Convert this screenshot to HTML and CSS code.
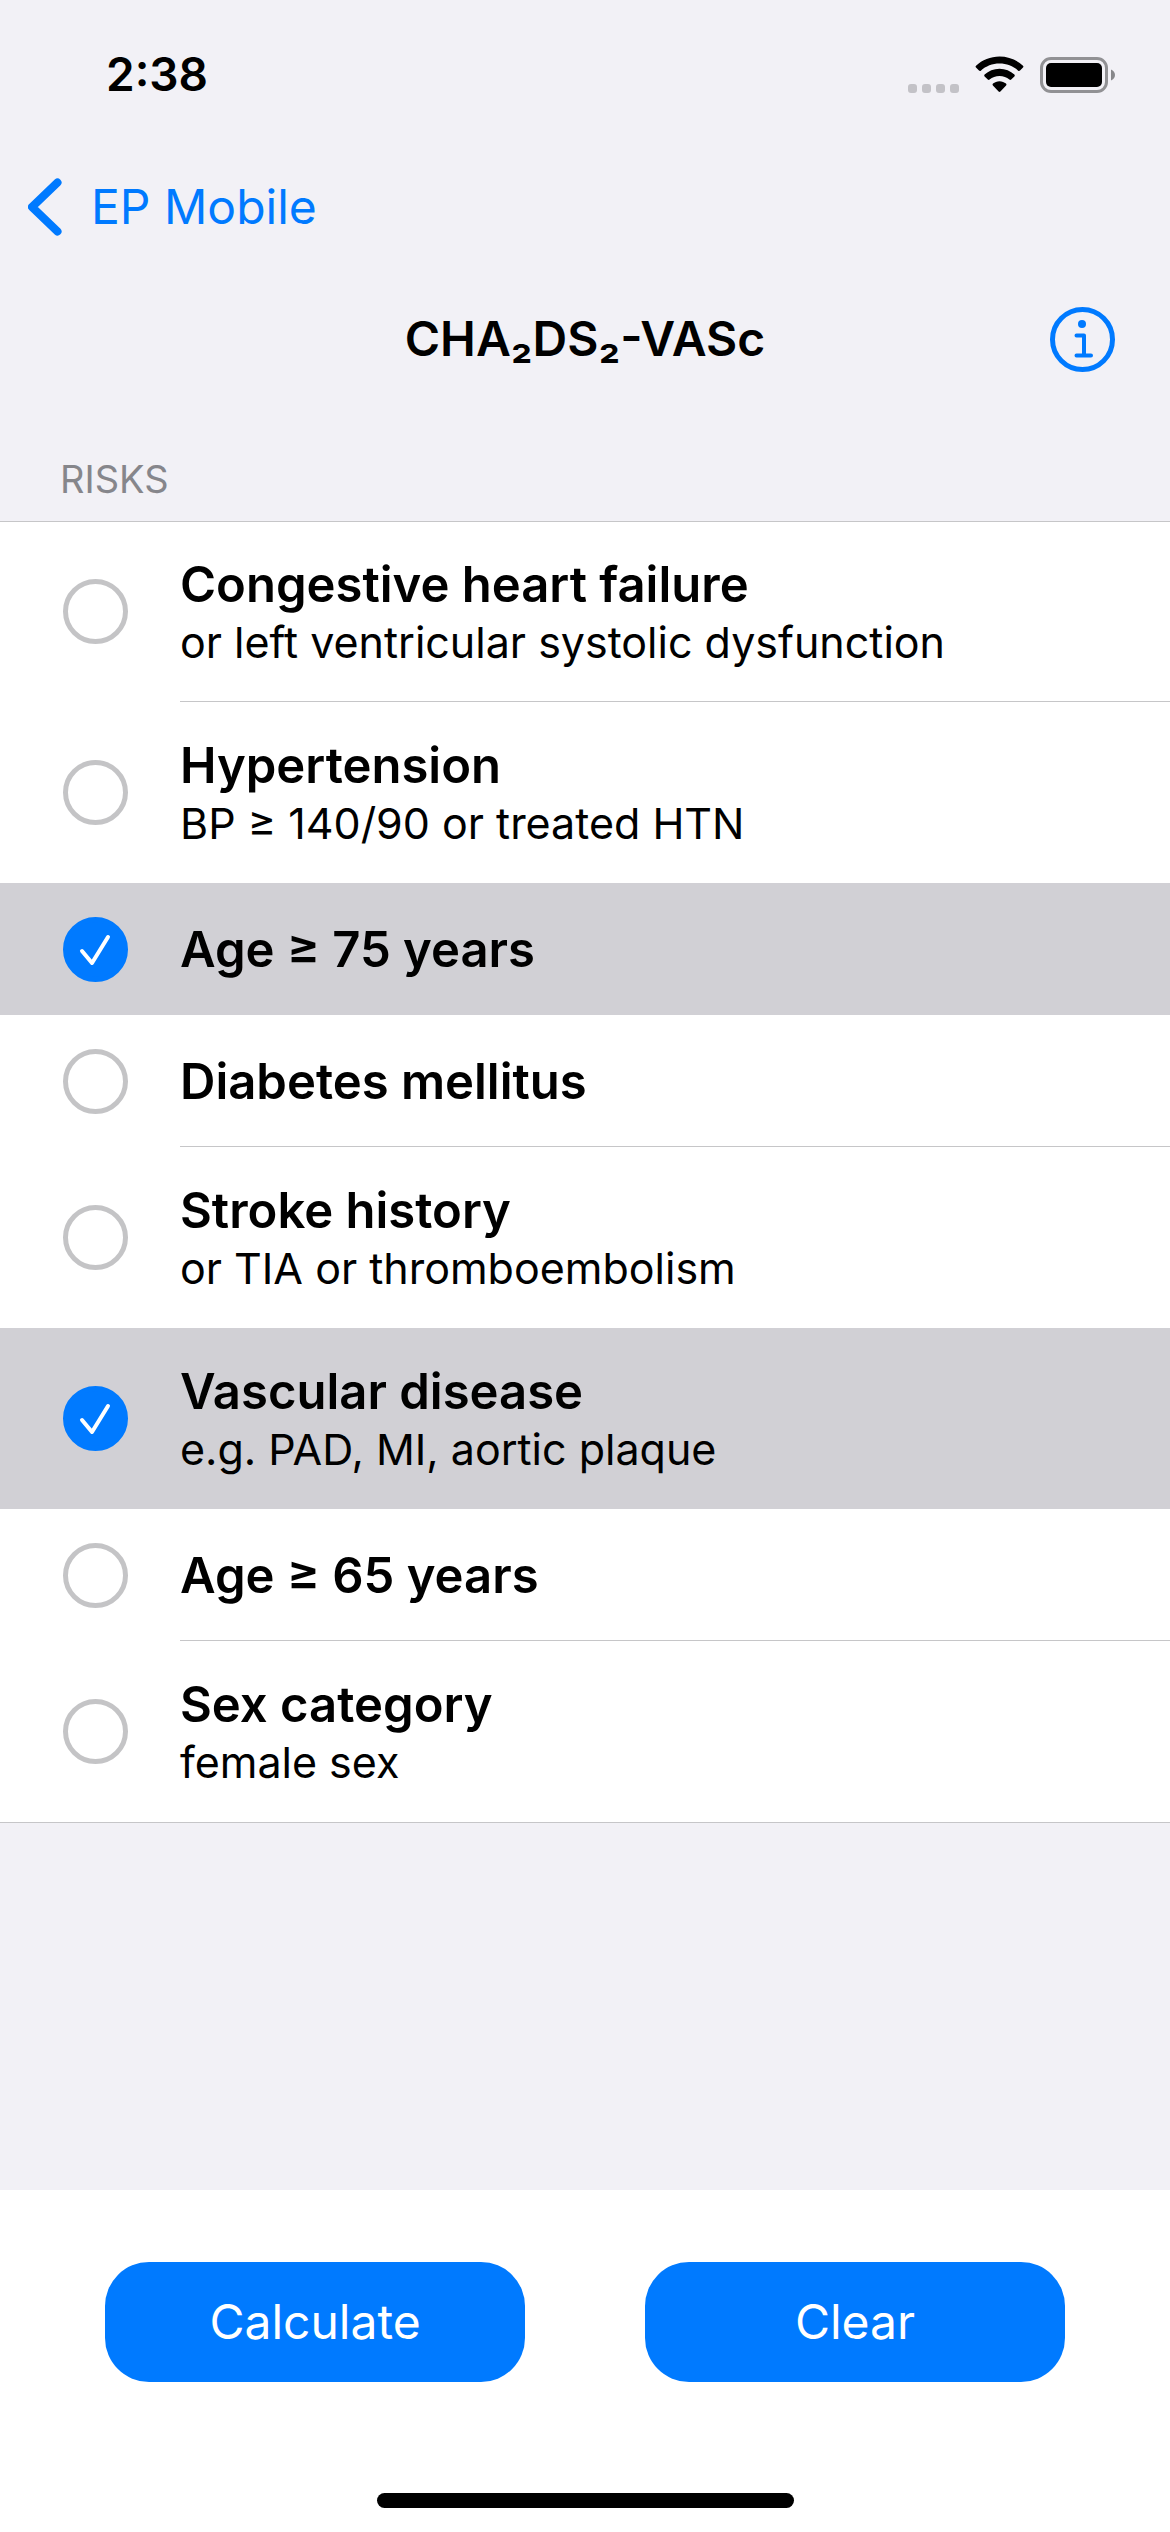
FILE: index.html
```html
<!DOCTYPE html>
<html lang="en">
<head>
  <meta charset="utf-8">
  <meta name="viewport" content="width=device-width, initial-scale=1">
  <title>CHA₂DS₂-VASc</title>
  <link rel="stylesheet" href="styles.css">
</head>
<body>
  <div class="status-bar">
    <time class="clock">2:38</time>
    <div class="indicators">
      <svg class="signal" width="51" height="9" viewBox="0 0 51 9" aria-hidden="true">
        <rect width="9" height="9" rx="3"/><rect x="14" width="9" height="9" rx="3"/><rect x="28" width="9" height="9" rx="3"/><rect x="42" width="9" height="9" rx="3"/>
      </svg>
      <svg class="wifi" width="49" height="37" viewBox="0 0 49 37" aria-hidden="true">
        <path d="M24.500 0.500C33.500 0.500 41.800 4 48 9.700Q48.900 10.600 48 11.500L45 14.600Q44.100 15.500 43.200 14.700C38.100 10.200 31.600 7.600 24.500 7.600S10.900 10.200 5.800 14.700Q4.900 15.500 4 14.600L1 11.500Q0.100 10.600 1 9.700C7.200 4 15.500 0.500 24.500 0.500Z"/>
        <path d="M24.500 12.800C30.300 12.800 35.500 15 39.400 18.600Q40.300 19.500 39.400 20.400L36.200 23.500Q35.300 24.400 34.400 23.600C31.700 21.300 28.300 20 24.500 20S17.300 21.300 14.600 23.600Q13.700 24.400 12.800 23.500L9.600 20.400Q8.700 19.500 9.600 18.600C13.500 15 18.700 12.800 24.500 12.800Z"/>
        <path d="M24.500 25.200C27 25.200 29.300 26.100 31 27.600Q32 28.500 31.100 29.400L25.400 35.500Q24.500 36.400 23.600 35.500L17.900 29.400Q17 28.500 18 27.600C19.700 26.100 22 25.200 24.500 25.200Z"/>
      </svg>
      <svg class="battery" width="75" height="36" viewBox="0 0 75 36" aria-hidden="true">
        <rect class="battery-shell" x="1.500" y="1.500" width="65" height="33" rx="9.500"/>
        <rect x="6" y="6" width="56" height="24" rx="5"/>
        <path class="battery-cap" d="M71 12.500C73.500 13.500 75 15.500 75 18S73.500 22.500 71 23.500Z"/>
      </svg>
    </div>
  </div>

  <nav class="nav">
    <a class="back" href="#">
      <svg width="34" height="58" viewBox="0 0 34 58" aria-hidden="true"><path d="M29.500 4.500L4 29L29.500 53.500"/></svg>
      <span>EP Mobile</span>
    </a>
  </nav>

  <header class="title-bar">
    <h1>CHA₂DS₂-VASc</h1>
    <button class="info" type="button" aria-label="Information">
      <svg width="65" height="65" viewBox="0 0 65 65" aria-hidden="true">
        <circle class="info-ring" cx="32.500" cy="32.500" r="30"/>
        <circle class="info-dot" cx="32" cy="17" r="4"/>
        <path class="info-stem" d="M26.500 28.500H34V48.500M26.500 48.500H41"/>
      </svg>
    </button>
  </header>

  <main>
    <h2>RISKS</h2>
    <ul class="risks">
      <li><label class="risk">
        <span class="tick"><input type="checkbox"><svg viewBox="0 0 65 65" aria-hidden="true"><path d="M19 34L29 46L45 20"/></svg></span>
        <span class="text"><span class="name">Congestive heart failure</span><span class="detail">or left ventricular systolic dysfunction</span></span>
      </label></li>
      <li><label class="risk">
        <span class="tick"><input type="checkbox"><svg viewBox="0 0 65 65" aria-hidden="true"><path d="M19 34L29 46L45 20"/></svg></span>
        <span class="text"><span class="name">Hypertension</span><span class="detail">BP ≥ 140/90 or treated HTN</span></span>
      </label></li>
      <li><label class="risk">
        <span class="tick"><input type="checkbox" checked><svg viewBox="0 0 65 65" aria-hidden="true"><path d="M19 34L29 46L45 20"/></svg></span>
        <span class="text"><span class="name">Age ≥ 75 years</span></span>
      </label></li>
      <li><label class="risk">
        <span class="tick"><input type="checkbox"><svg viewBox="0 0 65 65" aria-hidden="true"><path d="M19 34L29 46L45 20"/></svg></span>
        <span class="text"><span class="name">Diabetes mellitus</span></span>
      </label></li>
      <li><label class="risk">
        <span class="tick"><input type="checkbox"><svg viewBox="0 0 65 65" aria-hidden="true"><path d="M19 34L29 46L45 20"/></svg></span>
        <span class="text"><span class="name">Stroke history</span><span class="detail">or TIA or thromboembolism</span></span>
      </label></li>
      <li><label class="risk">
        <span class="tick"><input type="checkbox" checked><svg viewBox="0 0 65 65" aria-hidden="true"><path d="M19 34L29 46L45 20"/></svg></span>
        <span class="text"><span class="name">Vascular disease</span><span class="detail">e.g. PAD, MI, aortic plaque</span></span>
      </label></li>
      <li><label class="risk">
        <span class="tick"><input type="checkbox"><svg viewBox="0 0 65 65" aria-hidden="true"><path d="M19 34L29 46L45 20"/></svg></span>
        <span class="text"><span class="name">Age ≥ 65 years</span></span>
      </label></li>
      <li><label class="risk">
        <span class="tick"><input type="checkbox"><svg viewBox="0 0 65 65" aria-hidden="true"><path d="M19 34L29 46L45 20"/></svg></span>
        <span class="text"><span class="name">Sex category</span><span class="detail">female sex</span></span>
      </label></li>
    </ul>
  </main>

  <footer class="actions">
    <div class="buttons">
      <button class="action" type="button">Calculate</button>
      <button class="action" type="button">Clear</button>
    </div>
    <div class="home-indicator"></div>
  </footer>
</body>
</html>
```
FILE: styles.css
```css
:root {
  --blue: #007aff;
  --page: #f2f1f6;
  --line: #c6c6c8;
  --selected: #d1d0d5;
}

* {
  box-sizing: border-box;
}

body {
  margin: 0;
  min-height: 100vh;
  display: flex;
  flex-direction: column;
  background: var(--page);
  color: #000;
  font-family: Inter, "Liberation Sans", sans-serif;
}

svg {
  display: block;
}

button {
  border: 0;
  padding: 0;
  font: inherit;
  cursor: pointer;
}

.status-bar {
  display: flex;
  justify-content: space-between;
  align-items: center;
  height: 148px;
  padding: 0 55px 0 106px;
}

.clock {
  font-size: 46px;
  line-height: 56px;
  font-weight: 600;
}

.indicators {
  display: flex;
  align-items: flex-end;
  gap: 16px;
}

.signal {
  fill: #c3c2c7;
}

.battery-shell {
  fill: none;
  stroke: #919194;
  stroke-width: 3;
}

.battery-cap {
  fill: #87878a;
}

.nav {
  display: flex;
  align-items: center;
  height: 118px;
  padding: 0 28px;
}

.back {
  display: flex;
  align-items: center;
  gap: 29px;
  color: var(--blue);
  font-size: 48px;
  line-height: 60px;
  text-decoration: none;
}

.back path {
  fill: none;
  stroke: currentColor;
  stroke-width: 8;
  stroke-linecap: round;
  stroke-linejoin: round;
}

.title-bar {
  display: grid;
  grid-template-columns: 1fr auto 1fr;
  align-items: center;
  height: 146px;
  padding: 0 55px;
}

h1 {
  grid-column: 2;
  margin: 0;
  font-size: 48px;
  line-height: 60px;
  font-weight: 600;
}

.info {
  justify-self: end;
  background: none;
}

.info-ring,
.info-stem {
  fill: none;
  stroke: var(--blue);
  stroke-width: 5;
}

.info-stem {
  stroke-width: 4;
  stroke-linecap: round;
  stroke-linejoin: round;
}

.info-dot {
  fill: var(--blue);
}

main {
  flex: 1;
}

h2 {
  margin: 0;
  padding: 43px 60px 18px;
  color: #86868b;
  font-size: 38px;
  line-height: 48px;
  font-weight: 400;
}

.risks {
  margin: 0;
  padding: 0;
  list-style: none;
  background: #fff;
  border-bottom: 1px solid var(--line);
}

.risk {
  display: grid;
  grid-template-columns: 65px 1fr;
  column-gap: 52px;
  align-items: stretch;
  padding-left: 63px;
}

li:first-child .risk {
  box-shadow: inset 0 1px var(--line);
}

.risk:has(:checked) {
  background: var(--selected);
}

.tick {
  display: grid;
  align-content: center;
}

.tick input,
.tick svg {
  grid-area: 1 / 1;
  width: 65px;
  height: 65px;
  margin: 0;
}

.tick input {
  appearance: none;
  border: 5px solid #c4c4c6;
  border-radius: 50%;
}

.tick input:checked {
  border-color: var(--blue);
  background: var(--blue);
}

.tick svg {
  visibility: hidden;
  fill: none;
  stroke: #fff;
  stroke-width: 4;
  stroke-linecap: round;
  stroke-linejoin: round;
  pointer-events: none;
}

.tick input:checked + svg {
  visibility: visible;
}

.text {
  display: flex;
  flex-direction: column;
  justify-content: center;
  min-height: 132px;
  padding: 34px 0 32px;
  border-bottom: 1px solid var(--line);
}

/* No separator beside a selected row, nor under the last one. */
.risk:has(:checked) .text,
li:has(+ li :checked) .text,
li:last-child .text {
  border-bottom-color: transparent;
}

.name {
  font-size: 49px;
  line-height: 60px;
  font-weight: 600;
}

.detail {
  font-size: 43px;
  line-height: 54px;
}

.actions {
  display: flex;
  flex-direction: column;
  align-items: center;
  padding: 72px 105px 24px;
  background: #fff;
}

.buttons {
  display: grid;
  grid-template-columns: 1fr 1fr;
  gap: 120px;
  width: 100%;
}

.action {
  height: 120px;
  border-radius: 44px;
  background: var(--blue);
  color: #fff;
  font-size: 48px;
  line-height: 60px;
}

.home-indicator {
  width: 417px;
  height: 15px;
  margin-top: 111px;
  border-radius: 8px;
  background: #000;
}
```
